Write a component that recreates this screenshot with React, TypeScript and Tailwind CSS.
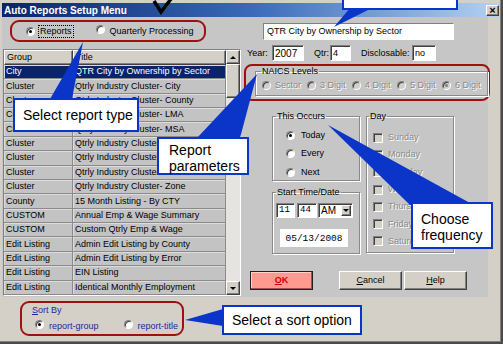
import React from 'react';

const rows: [string, string][] = [
  ['City', 'QTR City by Ownership by Sector'],
  ['Cluster', 'Qtrly Industry Cluster- City'],
  ['Cluster', 'Qtrly Industry Cluster- County'],
  ['Cluster', 'Qtrly Industry Cluster- LMA'],
  ['Cluster', 'Qtrly Industry Cluster- MSA'],
  ['Cluster', 'Qtrly Industry Cluster- Region'],
  ['Cluster', 'Qtrly Industry Cluster- State'],
  ['Cluster', 'Qtrly Industry Cluster- WIA'],
  ['Cluster', 'Qtrly Industry Cluster- Zone'],
  ['County', '15 Month Listing - By CTY'],
  ['CUSTOM', 'Annual Emp & Wage Summary'],
  ['CUSTOM', 'Custom Qtrly Emp & Wage'],
  ['Edit Listing', 'Admin Edit Listing by County'],
  ['Edit Listing', 'Admin Edit Listing by Error'],
  ['Edit Listing', 'EIN Listing'],
  ['Edit Listing', 'Identical Monthly Employment'],
];

const days = ['Sunday', 'Monday', 'Tuesday', 'Wednesday', 'Thursday', 'Friday', 'Saturday'];
const naics = ['Sector', '3 Digit', '4 Digit', '5 Digit', '6 Digit'];

const sunken =
  'border border-t-[#808080] border-l-[#808080] border-b-white border-r-white shadow-[inset_1px_1px_0_#404040]';
const raised =
  'border border-t-white border-l-white border-b-[#404040] border-r-[#404040] shadow-[inset_-1px_-1px_0_#808080]';
const disabledText = 'text-[#8a8a8a] [text-shadow:1px_1px_0_#ffffff]';

function Radio({ checked = false, disabled = false }: { checked?: boolean; disabled?: boolean }) {
  return (
    <span
      className={`relative inline-block h-[9px] w-[9px] shrink-0 rounded-full border border-t-[#808080] border-l-[#808080] border-b-white border-r-white shadow-[inset_1px_1px_0_#404040] ${
        disabled ? 'bg-[#d4d0c8]' : 'bg-white'
      }`}
    >
      {checked && (
        <span
          className={`absolute left-[2px] top-[2px] h-[3px] w-[3px] rounded-full ${disabled ? 'bg-[#808080]' : 'bg-black'}`}
        />
      )}
    </span>
  );
}

function Check() {
  return <span className={`inline-block h-[10px] w-[10px] shrink-0 bg-[#d4d0c8] ${sunken}`} />;
}

function Callout({ className, children }: { className: string; children?: React.ReactNode }) {
  return (
    <div
      className={`absolute border-2 border-[#0a35c8] bg-white font-['Liberation_Sans',Arial,sans-serif] text-[14px] leading-[16px] text-black ${className}`}
    >
      {children}
    </div>
  );
}

export default function App() {
  return (
    <div className="relative h-[344px] w-[503px] overflow-hidden border-b-2 border-r-2 border-[#4a4a4a] bg-[#d4d0c8] pl-[2px] pr-[1px] pt-[3px] font-['Liberation_Sans',Arial,sans-serif] text-[9px] leading-[11px] text-black shadow-[inset_-1px_-1px_0_#808080]">
      {/* Title bar */}
      <div className="flex h-[14px] items-center justify-between bg-linear-to-r from-[#0a246a] via-[#3a6ab8] to-[#b4d2f2] pl-[2px] pr-[1px]">
        <span className="text-[10px] font-bold text-white">Auto Reports Setup Menu</span>
        <span className={`flex h-[11px] w-[13px] items-center justify-center bg-[#d4d0c8] text-[11px] font-bold leading-none ${raised}`}>
          ×
        </span>
      </div>

      {/* Upper panel */}
      <div className="flex h-[280px] w-[486px] bg-[#c6c6c6]">
        {/* Left column */}
        <div className="flex w-[239px] flex-col">
          <div className="ml-[8px] mt-[3px] flex h-[22px] w-[196px] items-center rounded-[9px] border-2 border-[#a01010] pl-[14px]">
            <Radio checked />
            <span className="ml-[3px] border border-dotted border-black px-[1px]">Reports</span>
            <span className="ml-[22px]">
              <Radio />
            </span>
            <span className="ml-[5px]">Quarterly Processing</span>
          </div>

          {/* Listbox */}
          <div className={`ml-[1px] mt-[7px] flex h-[247px] w-[238px] bg-[#c3c3c3] ${sunken}`}>
            <div className="flex w-[222px] flex-col">
              <div className="flex h-[15px]">
                <div className={`flex w-[69px] items-center bg-[#d4d0c8] pl-[2px] ${raised}`}>Group</div>
                <div className={`flex flex-1 items-center bg-[#d4d0c8] pl-[2px] ${raised}`}>Title</div>
              </div>
              {rows.map(([g, t], i) => (
                <div
                  key={i}
                  className={`flex h-[14.4px] ${i === 0 ? 'bg-[#0a246a] text-white' : 'bg-[#c3c3c3]'}`}
                >
                  <div className="flex w-[69px] items-center border-b border-r border-[#8a8a8a] pl-[2px] shadow-[inset_1px_1px_0_#dcdcdc]">
                    {g}
                  </div>
                  <div className="flex flex-1 items-center border-b border-r border-[#8a8a8a] pl-[2px] shadow-[inset_1px_1px_0_#dcdcdc]">
                    {t}
                  </div>
                </div>
              ))}
            </div>
            {/* Scrollbar */}
            <div className="ml-auto flex w-[14px] flex-col bg-[#e6e4e0]">
              <div className={`flex h-[14px] items-center justify-center bg-[#d4d0c8] ${raised}`}>
                <span className="h-0 w-0 border-x-[3px] border-b-[3px] border-x-transparent border-b-black" />
              </div>
              <div className={`h-[34px] bg-[#d4d0c8] ${raised}`} />
              <div className="flex-1" />
              <div className={`flex h-[14px] items-center justify-center bg-[#d4d0c8] ${raised}`}>
                <span className="h-0 w-0 border-x-[3px] border-t-[3px] border-x-transparent border-t-black" />
              </div>
            </div>
          </div>
        </div>

        {/* Right column */}
        <div className="flex w-[247px] flex-col">
          <div className={`ml-[22px] mt-[6px] flex h-[17px] w-[191px] items-center bg-white pl-[3px] ${sunken} shadow-none border-[#c6c6c6]`}>
            QTR City by Ownership by Sector
          </div>

          <div className="mt-[5px] flex h-[16px] items-center">
            <span className="ml-[6px] w-[25px]">Year:</span>
            <span className={`flex h-full w-[32px] items-center bg-white pl-[2px] text-[10px] ${sunken}`}>2007</span>
            <span className="ml-[10px] w-[16px]">Qtr:</span>
            <span className={`flex h-full w-[21px] items-center bg-white pl-[2px] ${sunken}`}>4</span>
            <span className="ml-[10px] w-[51px]">Disclosable:</span>
            <span className={`flex h-full w-[24px] items-center bg-white pl-[2px] ${sunken}`}>no</span>
          </div>

          {/* NAICS */}
          <div className="ml-[3px] mt-[3px] h-[37px] w-[246px] rounded-[8px] border-2 border-[#a01010]">
            <fieldset className="ml-[9px] mt-[0px] h-[30px] w-[232px] border border-[#8a8a8a] shadow-[1px_1px_0_#ffffff,inset_1px_1px_0_#ffffff]">
              <legend className="ml-[5px] px-[1px]">NAICS Levels</legend>
              <div className="mt-[3px] flex items-center pl-[6px]">
                {naics.map((n, i) => (
                  <div key={n} className="flex w-[45px] items-center">
                    <Radio disabled checked={i === 4} />
                    <span className={`ml-[4px] ${disabledText}`}>{n}</span>
                  </div>
                ))}
              </div>
            </fieldset>
          </div>

          {/* Group boxes */}
          <div className="ml-[31px] mt-[10px] flex">
            <div className="flex w-[88px] flex-col">
              <fieldset className="h-[70px] border border-[#8a8a8a] shadow-[1px_1px_0_#ffffff,inset_1px_1px_0_#ffffff]">
                <legend className="ml-[3px] px-[1px]">This Occurs</legend>
                <div className="mt-[4px] flex flex-col pl-[13px]">
                  {['Today', 'Every', 'Next'].map((o, i) => (
                    <div key={o} className="flex h-[18.5px] items-center">
                      <Radio checked={i === 0} />
                      <span className="ml-[6px]">{o}</span>
                    </div>
                  ))}
                </div>
              </fieldset>
              <fieldset className="mt-[6px] h-[67px] border border-[#8a8a8a] shadow-[1px_1px_0_#ffffff,inset_1px_1px_0_#ffffff]">
                <legend className="ml-[3px] px-[1px]">Start Time/Date</legend>
                <div className="mt-[5px] flex h-[15px] pl-[3px] font-['Liberation_Mono',monospace] text-[9px]">
                  <span className={`flex w-[19px] items-center bg-white pl-[2px] ${sunken}`}>11</span>
                  <span className={`ml-[2px] flex w-[20px] items-center bg-white pl-[2px] ${sunken}`}>44</span>
                  <span className={`ml-[1px] flex w-[35px] items-center bg-white pl-[2px] font-['Liberation_Sans',Arial,sans-serif] text-[10px] ${sunken}`}>
                    AM
                    <span className={`ml-auto mr-[1px] flex h-[11px] w-[10px] items-center justify-center bg-[#d4d0c8] ${raised}`}>
                      <span className="h-0 w-0 border-x-[3px] border-t-[3px] border-x-transparent border-t-black" />
                    </span>
                  </span>
                </div>
                <div className="ml-[7px] mt-[11px] flex h-[18px] w-[68px] items-center justify-center bg-white font-['Liberation_Mono',monospace] text-[9.5px]">
                  05/13/2008
                </div>
              </fieldset>
            </div>
            <fieldset className="ml-[6px] h-[142px] w-[88px] border border-[#8a8a8a] shadow-[1px_1px_0_#ffffff,inset_1px_1px_0_#ffffff]">
              <legend className="ml-[2px] px-[1px]">Day</legend>
              <div className="mt-[7px] flex flex-col pl-[6px]">
                {days.map((d) => (
                  <div key={d} className="flex h-[17.3px] items-center">
                    <Check />
                    <span className={`ml-[5px] ${disabledText}`}>{d}</span>
                  </div>
                ))}
              </div>
            </fieldset>
          </div>

          {/* Buttons */}
          <div className="ml-[9px] mt-[17px] flex h-[19px]">
            <div className="flex w-[63px] items-center justify-center border border-[#202020] bg-[#ff9a90] font-bold text-[#d00000] shadow-[inset_-1px_-1px_0_#a05050,inset_1px_1px_0_#ffd0c8]">
              <span>
                <span className="underline">O</span>K
              </span>
            </div>
            <div className={`ml-[26px] flex w-[63px] items-center justify-center bg-[#d4d0c8] ${raised}`}>
              <span>
                <span className="underline">C</span>ancel
              </span>
            </div>
            <div className={`ml-[2px] flex w-[63px] items-center justify-center bg-[#d4d0c8] ${raised}`}>
              <span>
                <span className="underline">H</span>elp
              </span>
            </div>
          </div>
        </div>
      </div>

      {/* Sort By */}
      <div className="ml-[18px] mt-[4px] flex h-[35px] w-[164px] flex-col rounded-[9px] border-2 border-[#a01010] pl-[10px] text-[#1a2a9a]">
        <span className="mt-[2px]">
          <span className="underline">S</span>ort By
        </span>
        <div className="mt-[4px] flex items-center">
          <span className="ml-[3px]">
            <Radio checked />
          </span>
          <span className="ml-[5px]">report-group</span>
          <span className="ml-[25px]">
            <Radio />
          </span>
          <span className="ml-[5px]">report-title</span>
        </div>
      </div>

      {/* Callout pointers */}
      <svg className="pointer-events-none absolute left-0 top-0" width="503" height="344" viewBox="0 0 503 344">
        <polyline points="154,1 161,12 171,-1" fill="none" stroke="#000" strokeWidth="3.5" />
        <polygon points="350,8 372,8 334,27" fill="#0a35c8" />
        <polygon points="83,42 50,99 72,99" fill="#0a35c8" />
        <polygon points="257,74 197,138 240,138" fill="#0a35c8" />
        <polygon points="328,125 410,205 470,203" fill="#0a35c8" />
        <polygon points="185,320 223,309 223,326" fill="#0a35c8" />
      </svg>

      <Callout className="left-[342px] top-[-20px] h-[30px] w-[116px]" />
      <Callout className="left-[13px] top-[98px] flex h-[34px] w-[126px] items-center pl-[8px]">Select report type</Callout>
      <Callout className="left-[157px] top-[137px] h-[38px] w-[92px] pl-[10px] pt-[3px]">
        Report
        <br />
        parameters
      </Callout>
      <Callout className="left-[411px] top-[202px] h-[47px] w-[82px] pl-[8px] pt-[7px] leading-[14px]">
        Choose
        <br />
        frequency
      </Callout>
      <Callout className="left-[222px] top-[305px] flex h-[30px] w-[140px] items-center pl-[8px]">Select a sort option</Callout>
    </div>
  );
}
